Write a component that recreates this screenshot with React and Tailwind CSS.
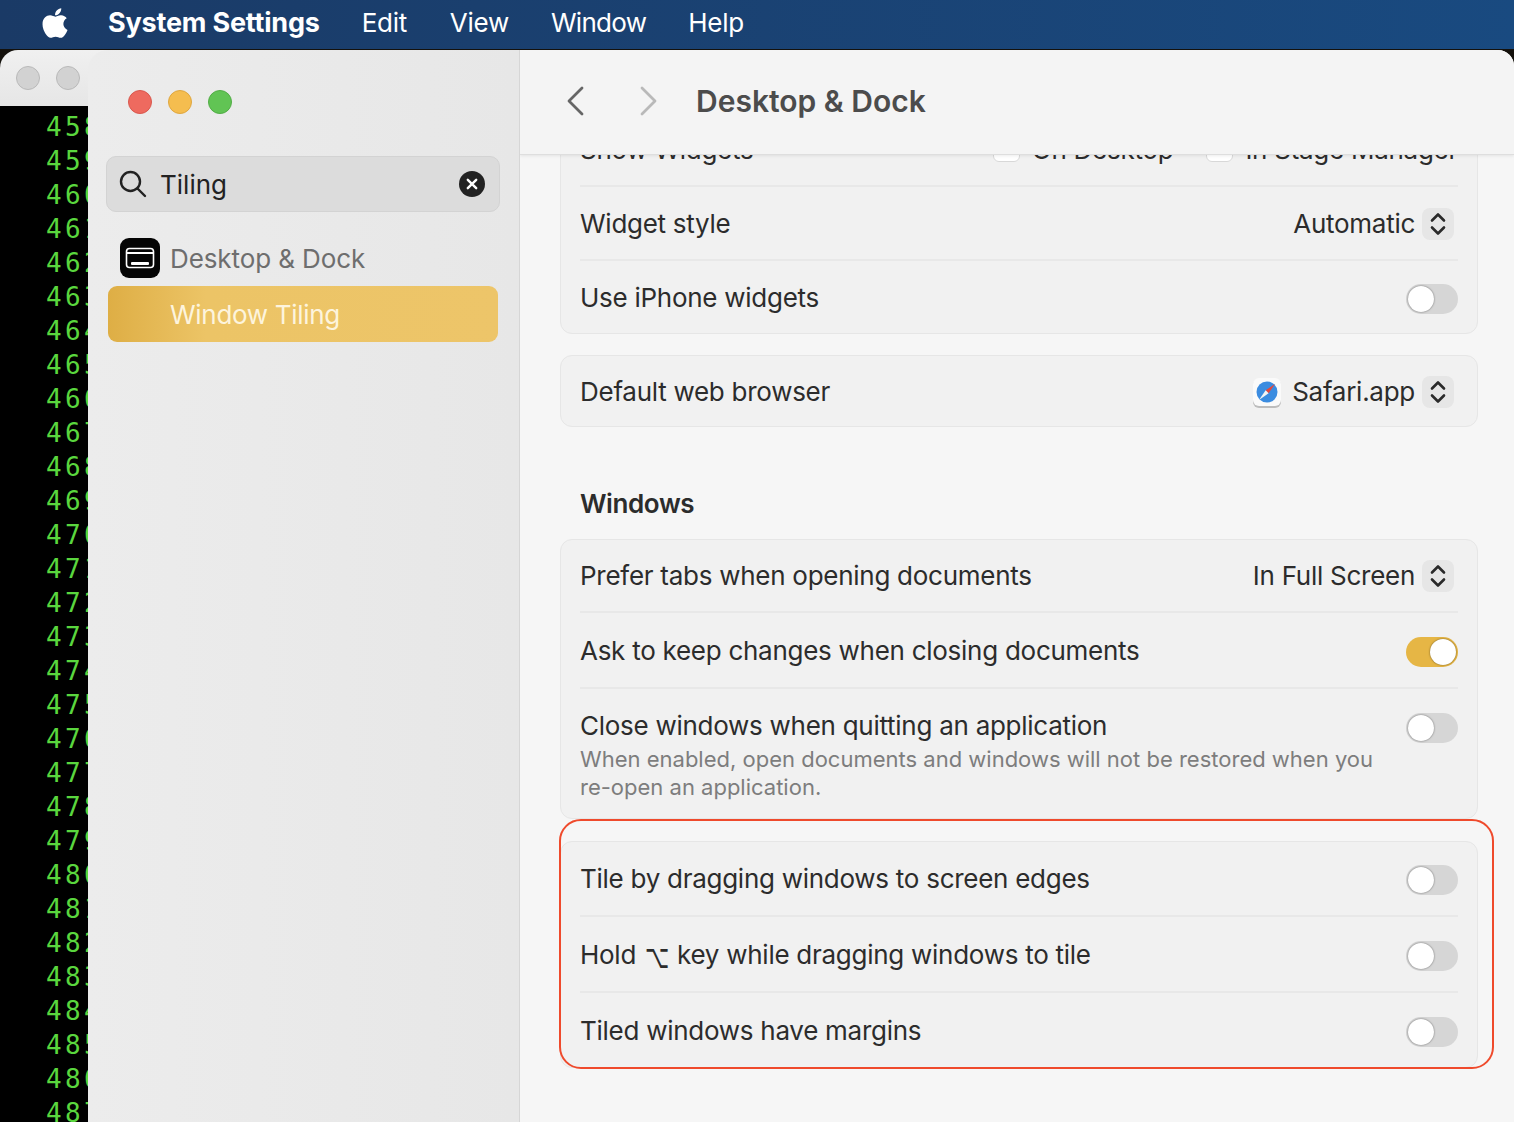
import React from 'react';
import { FaApple } from 'react-icons/fa';

const LINE_NUMBERS = [458, 459, 460, 461, 462, 463, 464, 465, 466, 467, 468, 469, 470, 471, 472, 473, 474, 475, 476, 477, 478, 479, 480, 481, 482, 483, 484, 485, 486, 487];

const Toggle = ({ on = false }) => (
  <div
    className={`mt-[3px] flex h-[30px] w-[52px] shrink-0 items-center rounded-full px-[2px] ${on ? 'justify-end bg-[#e6b645]' : 'justify-start bg-[#d6d6d6]'}`}
  >
    <div className="h-[26px] w-[26px] rounded-full bg-white shadow-[0_0_2px_rgba(0,0,0,0.55)]" />
  </div>
);

const Stepper = () => (
  <div className="ml-[7px] mr-[4px] mt-[1px] flex h-[32px] w-[32px] items-center justify-center rounded-[8px] bg-[#e6e6e6]">
    <svg width="16" height="26" viewBox="0 0 16 26" fill="none" stroke="#2a2a2a" strokeWidth="2.6" strokeLinecap="round" strokeLinejoin="round">
      <path d="M2 9.5 8 3.5l6 6" />
      <path d="M2 16.5l6 6 6-6" />
    </svg>
  </div>
);

const Row = ({ label, height, children, first }) => (
  <div className={`mx-[19px] flex items-center justify-between ${first ? '' : 'border-t-2 border-[#e8e8e8]'} ${height}`}>
    <span className="whitespace-nowrap">{label}</span>
    {children}
  </div>
);

const Card = ({ children, className = '' }) => (
  <div className={`rounded-[12px] border border-[#e6e6e6] bg-[#f1f1f1] ${className}`}>{children}</div>
);

const SafariIcon = () => (
  <svg width="30" height="32" viewBox="0 0 30 32" className="mr-[10px] mt-[2px]">
    <rect x="1" y="2" width="28" height="29" rx="6" fill="#bdbdbd" />
    <rect x="1" y="1" width="28" height="28" rx="6" fill="#fafafa" />
    <circle cx="15" cy="15" r="10.5" fill="#3b8ce0" />
    <path d="M23 7l-9.4 6.2 3 3z" fill="#e5483d" />
    <path d="M7 23l6.6-9.8 3 3z" fill="#f4f4f4" />
  </svg>
);

const CheckBox = () => <div className="h-[26px] w-[27px] rounded-[6px] border border-[#d8d8d8] bg-white" />;

export default function App() {
  return (
    <div className="relative flex h-[1122px] w-[1514px] flex-col overflow-hidden bg-[#14110c] font-['Inter',sans-serif]">
      {/* Menu bar */}
      <header className="flex h-[49px] shrink-0 items-center bg-gradient-to-r from-[#1a3a66] to-[#194a80] pb-[3px] pl-[38px] text-[26px] text-white">
        <FaApple className="mr-[36px] text-[34px]" />
        <span className="mr-[42px] mt-[1px] text-[27px] font-bold tracking-[-0.2px]">System Settings</span>
        <nav className="flex gap-[43px] pb-[1px] tracking-[-0.3px]">
          <span>Edit</span>
          <span>View</span>
          <span className="-ml-[1px] tracking-[-0.7px]">Window</span>
          <span className="-ml-[1px]">Help</span>
        </nav>
      </header>

      <main className="mt-[1px] flex min-h-0 flex-1">
        {/* Terminal behind */}
        <section className="-mr-[24px] flex w-[112px] shrink-0 flex-col overflow-hidden rounded-tl-[18px]">
          <div className="flex h-[56px] shrink-0 gap-[16px] bg-gradient-to-b from-[#f0f0f0] to-[#e6e6e6] pl-[16px] pt-[16px]">
            <div className="h-[24px] w-[24px] rounded-full border border-[#b9b9b9] bg-[#d2d2d2]" />
            <div className="h-[24px] w-[24px] rounded-full border border-[#b9b9b9] bg-[#d2d2d2]" />
          </div>
          <div className="flex-1 bg-black pl-[46px] pt-[4px] font-['DejaVu_Sans_Mono',monospace] text-[26px] leading-[34px] tracking-[3.4px] text-[#5ad63e]">
            {LINE_NUMBERS.map(n => <div key={n}>{n}</div>)}
          </div>
        </section>

        {/* Sidebar */}
        <aside className="relative z-10 flex w-[432px] shrink-0 flex-col rounded-tl-[20px] border-r border-[#d6d6d6] bg-gradient-to-r from-[#ececec] to-[#e7e7e7] pt-[40px]">
          <div className="ml-[40px] flex gap-[16px]">
            <div className="h-[24px] w-[24px] rounded-full border border-[#d9584e] bg-[#ee6a5f]" />
            <div className="h-[24px] w-[24px] rounded-full border border-[#dfa740] bg-[#f5bd4f]" />
            <div className="h-[24px] w-[24px] rounded-full border border-[#52ad46] bg-[#61c454]" />
          </div>

          <div className="ml-[18px] mt-[42px] flex h-[56px] w-[394px] items-center rounded-[10px] border border-[#d3d3d3] bg-[#dcdcdc] pl-[12px] pr-[14px] text-[#222]">
            <svg width="28" height="28" viewBox="0 0 28 28" fill="none" stroke="#222" strokeWidth="2.4" strokeLinecap="round">
              <circle cx="11.5" cy="11.5" r="9.5" />
              <path d="M18.5 18.5 26 26" />
            </svg>
            <span className="ml-[13px] flex-1 pt-[1px] text-[26px]">Tiling</span>
            <svg width="26" height="26" viewBox="0 0 26 26">
              <circle cx="13" cy="13" r="13" fill="#222" />
              <path d="M8.8 8.8l8.4 8.4M17.2 8.8l-8.4 8.4" stroke="#fff" strokeWidth="2.4" strokeLinecap="round" />
            </svg>
          </div>

          <div className="ml-[32px] mt-[26px] flex h-[40px] items-center">
            <svg width="40" height="40" viewBox="0 0 40 40" fill="none">
              <rect width="40" height="40" rx="9" fill="#050505" />
              <rect x="6.5" y="10.5" width="27" height="19" rx="3" stroke="#fff" strokeWidth="1.6" />
              <path d="M7 15h26" stroke="#fff" strokeWidth="2" />
              <rect x="11" y="24" width="18" height="3" rx="1" fill="#fff" />
            </svg>
            <span className="ml-[10px] text-[26px] tracking-[-0.1px] text-[#6e6e6e]">Desktop &amp; Dock</span>
          </div>

          <div className="ml-[20px] mt-[8px] flex h-[56px] w-[390px] items-center rounded-[9px] bg-[linear-gradient(90deg,#deae45_0%,#ecc466_25%,#edc569_100%)] pl-[62px] text-[26px] tracking-[-0.3px] text-[#fdf4dd]">
            Window Tiling
          </div>
        </aside>

        {/* Settings pane */}
        <section className="flex min-w-0 flex-1 flex-col overflow-hidden rounded-tr-[16px] bg-[#f6f6f6] text-[26px] tracking-[-0.27px] text-[#2c2c2c]">
          <div className="z-10 flex h-[105px] shrink-0 items-center border-b border-[#dedede] bg-[#f4f4f4] pb-[2px] pl-[46px] shadow-[0_1px_3px_rgba(0,0,0,0.08)]">
            <svg width="18" height="30" viewBox="0 0 18 30" fill="none" stroke="#666" strokeWidth="2.8" strokeLinecap="round" strokeLinejoin="round">
              <path d="M16 2 3 15l13 13" />
            </svg>
            <svg width="18" height="30" viewBox="0 0 18 30" fill="none" stroke="#b9b9b9" strokeWidth="2.8" strokeLinecap="round" strokeLinejoin="round" className="ml-[56px]">
              <path d="M2 2l13 13L2 28" />
            </svg>
            <h1 className="ml-[38px] text-[30px] font-semibold tracking-normal text-[#4c4c4c]">Desktop &amp; Dock</h1>
          </div>

          <div className="relative min-h-0 flex-1 overflow-hidden px-[40px] pr-[36px]">
            <Card className="-mt-[45px]">
              <Row first label="Show Widgets" height="h-[74px] pt-[2px]">
                <div className="flex items-center">
                  <CheckBox />
                  <span className="ml-[12px] mr-[33px]">On Desktop</span>
                  <CheckBox />
                  <span className="ml-[12px]">In Stage Manager</span>
                </div>
              </Row>
              <Row label="Widget style" height="h-[74px]">
                <div className="flex items-center">Automatic<Stepper /></div>
              </Row>
              <Row label="Use iPhone widgets" height="h-[74px]"><Toggle /></Row>
            </Card>

            <Card className="mt-[21px]">
              <Row first label="Default web browser" height="h-[70px] pt-[1px]">
                <div className="flex items-center"><SafariIcon />Safari.app<Stepper /></div>
              </Row>
            </Card>

            <h2 className="ml-[20px] mt-[60px] h-[52px] text-[26px] font-semibold leading-[34px] tracking-[-0.4px]">Windows</h2>

            <Card>
              <Row first label="Prefer tabs when opening documents" height="h-[71px]">
                <div className="flex items-center">In Full Screen<Stepper /></div>
              </Row>
              <Row label="Ask to keep changes when closing documents" height="h-[76px]"><Toggle on /></Row>
              <div className="mx-[19px] flex h-[131px] justify-between border-t-2 border-[#e8e8e8] pt-[20px]">
                <div>
                  <div className="leading-[34px]">Close windows when quitting an application</div>
                  <p className="mt-[2px] w-[810px] text-[22px] leading-[28px] tracking-normal text-[#7d7d7d]">
                    When enabled, open documents and windows will not be restored when you re-open an application.
                  </p>
                </div>
                <div className="pt-[1px]"><Toggle /></div>
              </div>
            </Card>

            <Card className="mt-[22px]">
              <Row first label="Tile by dragging windows to screen edges" height="h-[73px]"><Toggle /></Row>
              <Row
                label={<>Hold <span className="ml-[2px] mr-[1px] inline-block scale-y-[1.6] font-['DejaVu_Sans',sans-serif] text-[21px]">⌥</span> key while dragging windows to tile</>}
                height="h-[76px]"
              >
                <Toggle />
              </Row>
              <Row label="Tiled windows have margins" height="h-[76px]"><Toggle /></Row>
            </Card>
          </div>
        </section>
      </main>

      {/* Annotation drawn over the screenshot */}
      <div className="absolute left-[559px] top-[819px] h-[250px] w-[935px] rounded-[22px] border-2 border-[#ef4a2c]" />
    </div>
  );
}
